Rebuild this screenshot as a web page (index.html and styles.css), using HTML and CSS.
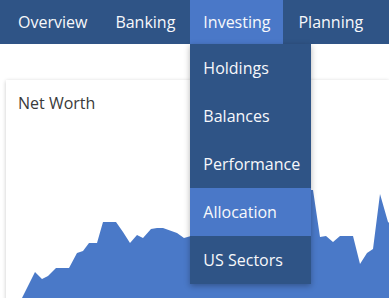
FILE: index.html
```html
<!DOCTYPE html>
<html lang="en">
<head>
  <meta charset="UTF-8" />
  <title>Net Worth</title>
  <link rel="stylesheet" href="styles.css">
</head>
<body>
  <nav class="topnav">
    <ul class="menu">
      <li><a href="#">Overview</a></li>
      <li><a href="#">Banking</a></li>
      <li class="active">
        <a href="#">Investing</a>
        <ul class="dropdown">
          <li><a href="#">Holdings</a></li>
          <li><a href="#">Balances</a></li>
          <li><a href="#">Performance</a></li>
          <li class="hover"><a href="#">Allocation</a></li>
          <li><a href="#">US Sectors</a></li>
        </ul>
      </li>
      <li><a href="#">Planning</a></li>
    </ul>
  </nav>
  <main class="content">
    <section class="card">
      <h2 class="card-title">Net Worth</h2>
      <svg class="chart" width="383" height="130" viewBox="0 0 383 130">
        <polygon fill="#4a79c8" points="14,130 14,122 16,118 29,92 36,99 42,96 50,88 63,88 71,73 77,71 83,63 91,63 97,42 110,42 117,52 124,63 131,55 137,58 145,49 151,48 157,48 171,53 178,58 185,56 250,40 304,10 307,10 314,57 320,56 327,62 334,56 347,56 354,84 361,73 367,69 374,14 382,42 394,52 394,130"/>
      </svg>
    </section>
  </main>
</body>
</html>
```

FILE: styles.css
```css
body {
  margin: 0;
  padding: 0;
  background-color: #fff;
  font-family: 'Open Sans', 'Noto Sans', sans-serif;
  overflow: hidden;
}
.topnav {
  background-color: #2f5486;
  height: 44px;
  position: relative;
  z-index: 10;
}
.menu {
  list-style: none;
  margin: 0;
  padding: 0 0 0 5px;
  display: flex;
  gap: 2px;
}
.menu > li {
  position: relative;
}
.menu a {
  display: block;
  color: #f7f8fb;
  text-decoration: none;
  font-size: 16px;
  line-height: 44px;
  padding: 0 13px;
  white-space: nowrap;
}
.menu > li.active > a {
  background-color: #4a78c8;
}
.dropdown {
  list-style: none;
  margin: 0;
  padding: 0;
  position: absolute;
  top: 44px;
  left: 0;
  width: 121px;
  background-color: #2f5486;
  box-shadow: 0 2px 6px rgba(0, 0, 0, 0.3);
}
.dropdown a {
  line-height: 48px;
}
.dropdown li.hover a {
  background-color: #4a78c8;
}
.content {
  padding-top: 36px;
}
.card {
  margin: 0 0 0 6px;
  padding: 12px 12px 0;
  background-color: #fff;
  box-shadow: 0 1px 4px rgba(0, 0, 0, 0.22);
}
.card-title {
  margin: 0;
  font-size: 16px;
  font-weight: 400;
  line-height: 22px;
  color: #3a3a3a;
}
.chart {
  display: block;
  margin: 66px 0 0 -12px;
}
```
